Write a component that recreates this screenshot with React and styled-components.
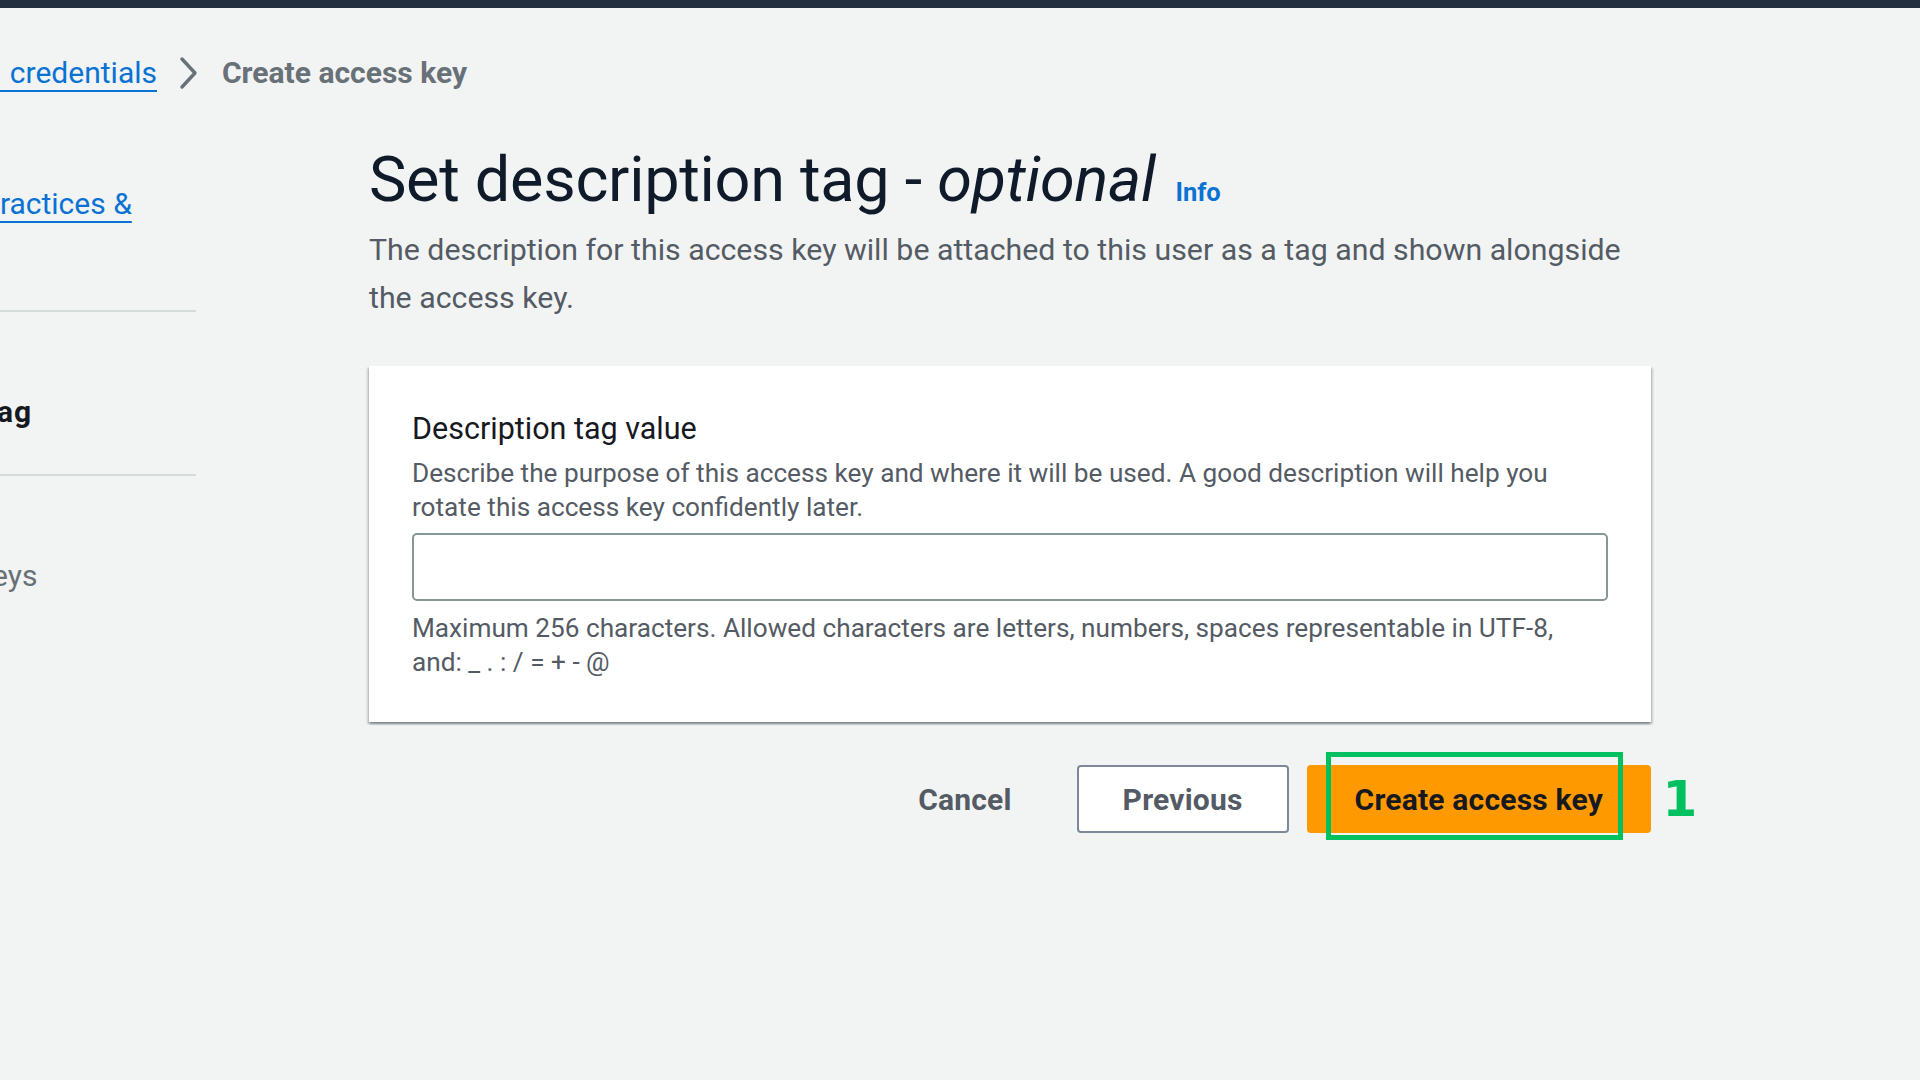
import React from "react";
import styled, { createGlobalStyle } from "styled-components";

const GlobalStyle = createGlobalStyle`
  html, body {
    margin: 0;
    padding: 0;
    background: #f2f3f3;
    overflow: hidden;
  }
  body {
    font-family: Roboto, "Liberation Sans", Arial, sans-serif;
    color: #16191f;
  }
`;

const TopBar = styled.div`
  height: 8px;
  background: #232f3e;
`;

const Page = styled.div`
  width: 1920px;
  height: 1072px;
  overflow: hidden;
`;

const Breadcrumbs = styled.nav`
  display: flex;
  align-items: center;
  margin: 45px 0 0 -109px;
  height: 40px;
  font-size: 30px;
  line-height: 40px;
`;

const CrumbLink = styled.a`
  color: #0972d3;
  word-spacing: 4px;
  text-decoration: underline;
  text-decoration-thickness: 2px;
  text-underline-offset: 7px;
`;

const Chevron = styled.svg`
  width: 22px;
  height: 34px;
  margin: 0 22px 0 21px;
`;

const CrumbCurrent = styled.span`
  color: #687078;
  font-weight: 700;
`;

const Layout = styled.div`
  display: grid;
  grid-template-columns: 436px 1282px;
  column-gap: 173px;
  margin-left: -240px;
  padding-top: 51px;
`;

const StepNav = styled.ul`
  list-style: none;
  margin: 0;
  padding: 6px 0 0;
`;

const Step = styled.li`
  padding: ${(p) => (p.first ? "0 0 46px" : "46px 0 42px")};
  border-bottom: ${(p) => (p.last ? "none" : "2px solid #d5dbdb")};
`;

const StepLabel = styled.div`
  font-size: 24px;
  line-height: 34px;
  color: #687078;
`;

const StepTitle = styled.div`
  font-size: 30px;
  line-height: 40px;
  color: ${(p) => (p.active ? "#16191f" : p.link ? "#0972d3" : "#687078")};
  font-weight: ${(p) => (p.active ? 700 : 400)};
  letter-spacing: ${(p) => (p.active ? "0.9px" : "0")};

  span {
    text-decoration: underline;
    text-decoration-thickness: 2px;
    text-underline-offset: 7px;
  }
`;

const Main = styled.main`
  display: flex;
  flex-direction: column;
`;

const Title = styled.h1`
  margin: 0;
  font-size: 63px;
  line-height: 72px;
  font-weight: 400;
  color: #0f1b2a;
  letter-spacing: -0.3px;

  em {
    font-style: italic;
  }
`;

const InfoLink = styled.a`
  margin-left: 20px;
  font-size: 25.5px;
  line-height: 1;
  font-weight: 700;
  color: #0972d3;
  letter-spacing: 0;
`;

const Lead = styled.p`
  margin: 10px 0 0;
  font-size: 30.3px;
  line-height: 48px;
  color: #545b64;
  max-width: 1280px;
`;

const Card = styled.section`
  margin-top: 44px;
  background: #ffffff;
  padding: 43px;
  box-shadow: 0 2px 2px 0 rgba(0, 28, 36, 0.3), 2px 2px 2px 0 rgba(0, 28, 36, 0.15),
    -2px 2px 2px 0 rgba(0, 28, 36, 0.15);
`;

const FieldLabel = styled.label`
  display: block;
  font-size: 30.5px;
  line-height: 40px;
  color: #16191f;
`;

const Hint = styled.div`
  margin-top: ${(p) => p.top || 0}px;
  font-size: 26.2px;
  line-height: 34px;
  color: #545b64;
`;

const TextInput = styled.input`
  display: block;
  box-sizing: border-box;
  width: 100%;
  height: 68px;
  margin-top: 9px;
  border: 2px solid #879596;
  border-radius: 5px;
  background: #fff;
  font-size: 26px;
  padding: 0 18px;
  outline: none;
`;

const Actions = styled.div`
  display: flex;
  justify-content: flex-end;
  align-items: center;
  gap: 18px;
  margin-top: 43px;
`;

const Button = styled.button`
  box-sizing: border-box;
  height: 68px;
  padding: 0 ${(p) => p.pad || 44}px;
  border-radius: 4px;
  font-family: Roboto, "Liberation Sans", Arial, sans-serif;
  font-size: 30px;
  font-weight: 700;
  letter-spacing: 0.2px;
  cursor: pointer;
  border: ${(p) =>
    p.variant === "normal" ? "2px solid #7d8998" : "2px solid transparent"};
  background: ${(p) =>
    p.variant === "primary" ? "#ff9900" : p.variant === "normal" ? "#fff" : "transparent"};
  color: ${(p) => (p.variant === "primary" ? "#16191f" : "#545b64")};
`;

const Highlight = styled.div`
  position: relative;
`;

const HighlightBox = styled.div`
  position: absolute;
  left: 19px;
  top: -13px;
  width: 297px;
  height: 88px;
  box-sizing: border-box;
  border: 5px solid #00c060;
  pointer-events: none;
`;

const StepNumber = styled.span`
  position: absolute;
  left: 356px;
  top: 50%;
  transform: translateY(-50%);
  font-family: "DejaVu Sans", sans-serif;
  font-weight: 700;
  font-size: 50px;
  line-height: 1;
  color: #00c060;
`;

const steps = [
  { label: "Step 1", title: "Access key best practices & alternatives", link: true },
  { label: "Step 2 - optional", title: "Set description tag", active: true },
  { label: "Step 3", title: "Retrieve access keys" },
];

export default function App() {
  return (
    <Page>
      <GlobalStyle />
      <TopBar />
      <Breadcrumbs>
        <CrumbLink>Security credentials</CrumbLink>
        <Chevron viewBox="0 0 22 34">
          <path
            d="M4 3l13 14L4 31"
            fill="none"
            stroke="#687078"
            strokeWidth="3.4"
            strokeLinecap="round"
            strokeLinejoin="round"
          />
        </Chevron>
        <CrumbCurrent>Create access key</CrumbCurrent>
      </Breadcrumbs>

      <Layout>
        <StepNav>
          {steps.map((s, i) => (
            <Step key={s.label} first={i === 0} last={i === steps.length - 1}>
              <StepLabel>{s.label}</StepLabel>
              <StepTitle active={s.active} link={s.link}>
                {s.link ? <span>{s.title}</span> : s.title}
              </StepTitle>
            </Step>
          ))}
        </StepNav>

        <Main>
          <Title>
            Set description tag - <em>optional</em>
            <InfoLink>Info</InfoLink>
          </Title>
          <Lead>
            The description for this access key will be attached to this user as a tag and
            shown alongside the access key.
          </Lead>

          <Card>
            <FieldLabel htmlFor="desc">Description tag value</FieldLabel>
            <Hint top={7}>
              Describe the purpose of this access key and where it will be used. A good
              description will help you rotate this access key confidently later.
            </Hint>
            <TextInput id="desc" />
            <Hint top={10}>
              Maximum 256 characters. Allowed characters are letters, numbers, spaces
              representable in UTF-8, and: _ . : / = + - @
            </Hint>
          </Card>

          <Actions>
            <Button variant="link" pad={45}>
              Cancel
            </Button>
            <Button variant="normal" pad={44}>
              Previous
            </Button>
            <Highlight>
              <Button variant="primary" pad={46}>
                Create access key
              </Button>
              <HighlightBox />
              <StepNumber>1</StepNumber>
            </Highlight>
          </Actions>
        </Main>
      </Layout>
    </Page>
  );
}
